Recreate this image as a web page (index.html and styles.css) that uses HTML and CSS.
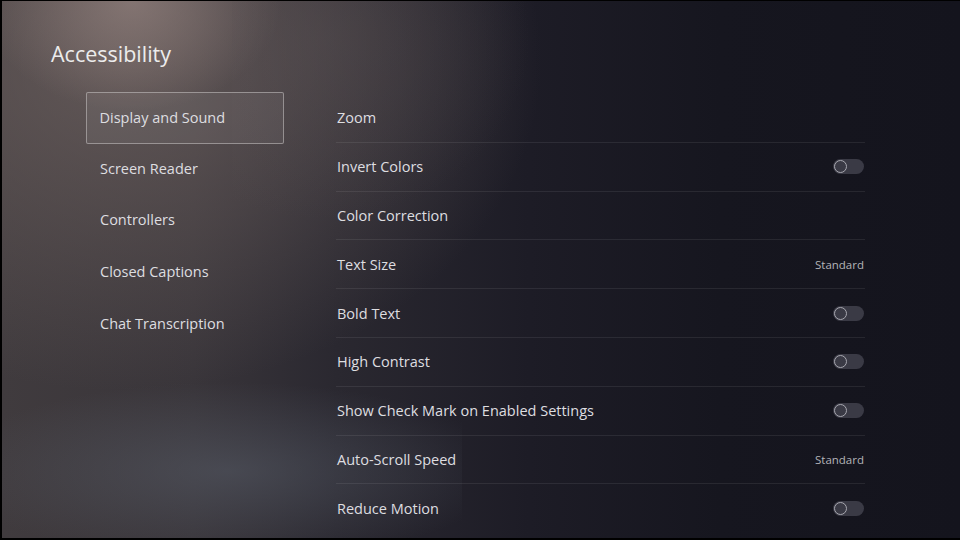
FILE: index.html
```html
<!DOCTYPE html>
<html>
<head>
<meta charset="utf-8">
<link rel="stylesheet" href="styles.css">
</head>
<body>
<div class="screen">
  <div class="glow-top"></div>
  <div class="glow-bottom"></div>
  <h1 class="title">Accessibility</h1>
  <div class="main">
    <nav class="nav">
      <div class="nav-item selected">Display and Sound</div>
      <div class="nav-item">Screen Reader</div>
      <div class="nav-item">Controllers</div>
      <div class="nav-item">Closed Captions</div>
      <div class="nav-item">Chat Transcription</div>
    </nav>
    <div class="list">
      <div class="row"><span>Zoom</span></div>
      <div class="row"><span>Invert Colors</span><span class="toggle"></span></div>
      <div class="row"><span>Color Correction</span></div>
      <div class="row"><span>Text Size</span><span class="value">Standard</span></div>
      <div class="row"><span>Bold Text</span><span class="toggle"></span></div>
      <div class="row"><span>High Contrast</span><span class="toggle"></span></div>
      <div class="row"><span>Show Check Mark on Enabled Settings</span><span class="toggle"></span></div>
      <div class="row"><span>Auto-Scroll Speed</span><span class="value">Standard</span></div>
      <div class="row last"><span>Reduce Motion</span><span class="toggle"></span></div>
    </div>
  </div>
</div>
</body>
</html>
```
FILE: styles.css
```css
html, body {
  margin: 0;
  padding: 0;
  background: #000;
}
.screen {
  position: relative;
  width: 958px;
  height: 537px;
  margin-left: 2px;
  margin-top: 1px;
  overflow: hidden;
  font-family: "Open Sans", "Noto Sans", sans-serif;
  color: #e4e4e6;
  background:
    radial-gradient(ellipse 150px 110px at 130px 0px, rgba(165,145,140,0.55), rgba(165,145,140,0) 100%),
    radial-gradient(ellipse 420px 330px at 120px 60px, rgba(110,98,96,0.75), rgba(110,98,96,0) 100%),
    linear-gradient(90deg, #403b3e 0%, #39353a 20%, #2a2830 35%, #1d1c26 55%, #16161f 75%, #14141d 100%);
}
.glow-top, .glow-bottom {
  position: absolute;
  pointer-events: none;
}
.glow-bottom {
  left: -60px;
  top: 380px;
  width: 520px;
  height: 180px;
  background: radial-gradient(ellipse at 55% 50%, rgba(90,96,108,0.5), rgba(90,96,108,0) 70%);
}
.glow-top {
  left: 230px;
  top: -40px;
  width: 300px;
  height: 260px;
  background: radial-gradient(ellipse at 30% 30%, rgba(90,82,84,0.35), rgba(90,82,84,0) 70%);
}
.title {
  position: relative;
  margin: 0;
  padding: 34px 0 0 49px;
  font-size: 21.5px;
  font-weight: 400;
  line-height: 38px;
  color: #ececec;
}
.main {
  position: relative;
  display: flex;
  gap: 52px;
  margin-top: 19px;
  margin-left: 84px;
}
.nav {
  width: 198px;
  display: flex;
  flex-direction: column;
}
.nav-item {
  height: 51.75px;
  box-sizing: border-box;
  padding-left: 14px;
  padding-bottom: 3px;
  display: flex;
  align-items: center;
  font-size: 14.5px;
  color: #dedee0;
}
.nav-item.selected {
  border: 1.5px solid rgba(200,196,196,0.55);
  border-radius: 2px;
  background: rgba(255,255,255,0.06);
  padding-left: 12.5px;
  padding-bottom: 1.5px;
}
.list {
  width: 529px;
  margin-top: 2px;
  display: flex;
  flex-direction: column;
}
.row {
  height: 48.8px;
  box-sizing: border-box;
  border-bottom: 1px solid rgba(255,255,255,0.08);
  display: flex;
  align-items: center;
  justify-content: space-between;
  padding: 0 1px 0 1px;
  font-size: 14.5px;
  color: #dedee0;
}
.row.last {
  border-bottom: none;
}
.value {
  font-size: 11.5px;
  color: #b4b4b8;
}
.toggle {
  position: relative;
  width: 31px;
  height: 15px;
  border-radius: 8px;
  background: #3a3a45;
  box-sizing: border-box;
}
.toggle::before {
  content: "";
  position: absolute;
  left: 1px;
  top: 1px;
  width: 13px;
  height: 13px;
  box-sizing: border-box;
  border-radius: 50%;
  border: 1.5px solid #a8a8b0;
}
```
